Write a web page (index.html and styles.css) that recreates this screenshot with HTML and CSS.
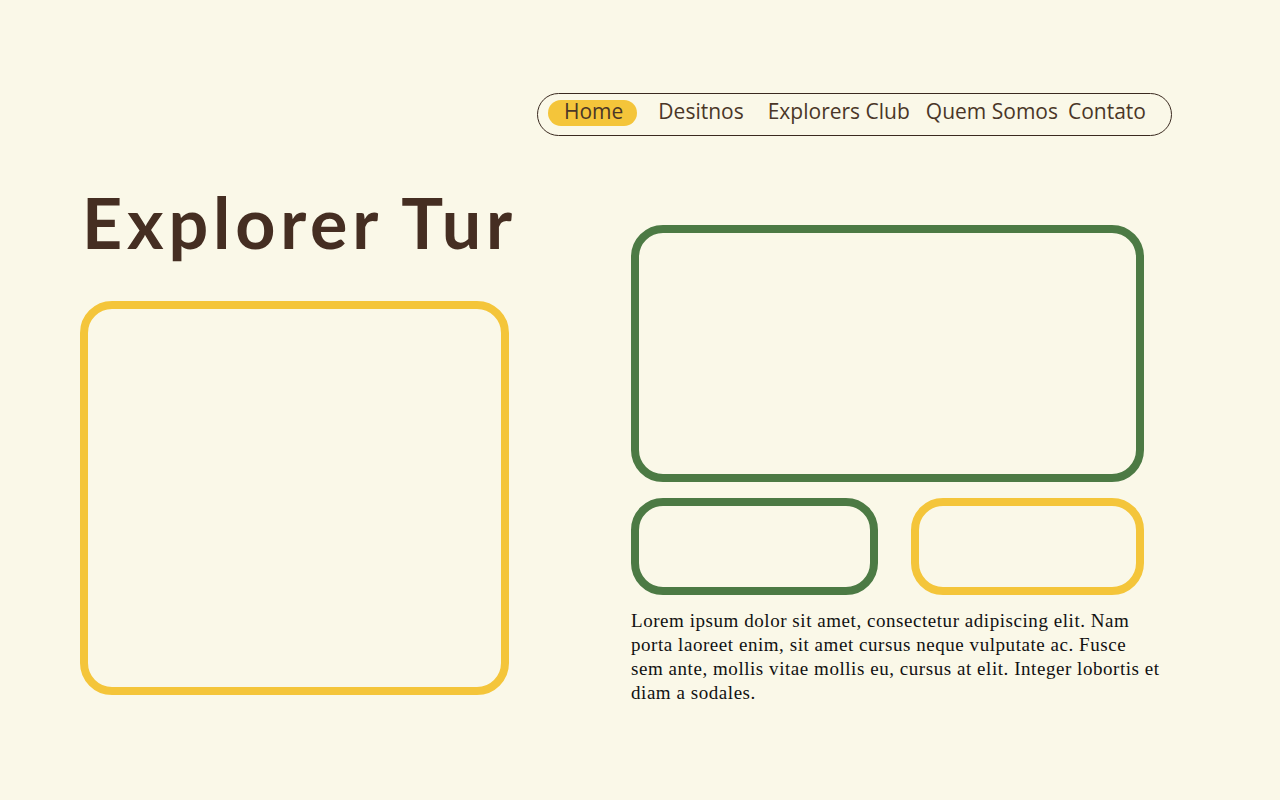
FILE: index.html
```html
<!DOCTYPE html>
<html lang="pt">
<head>
<meta charset="utf-8">
<title>Explorer Tur</title>
<link rel="stylesheet" href="styles.css">
</head>
<body>
<header class="topbar">
  <nav class="nav">
    <a class="nav-item active" href="#">Home</a>
    <a class="nav-item" href="#">Desitnos</a>
    <a class="nav-item" href="#">Explorers Club</a>
    <a class="nav-item" href="#">Quem Somos</a>
    <a class="nav-item" href="#">Contato</a>
  </nav>
</header>
<main class="content">
  <section class="left">
    <h1 class="title">Explorer Tur</h1>
    <div class="frame frame-yellow frame-hero"></div>
  </section>
  <section class="right">
    <div class="frame frame-green frame-wide"></div>
    <div class="small-row">
      <div class="frame frame-green frame-small-a"></div>
      <div class="frame frame-yellow frame-small-b"></div>
    </div>
    <p class="lorem">Lorem ipsum dolor sit amet, consectetur adipiscing elit. Nam porta laoreet enim, sit amet cursus neque vulputate ac. Fusce sem ante, mollis vitae mollis eu, cursus at elit. Integer lobortis et diam a sodales.</p>
  </section>
</main>
</body>
</html>
```

FILE: styles.css
```css
* { box-sizing: border-box; }
html, body { margin: 0; padding: 0; }
body {
  background: #faf8e8;
  width: 1280px;
  height: 800px;
  overflow: hidden;
  font-family: "Open Sans", "Lato", sans-serif;
  color: #452e22;
}
.topbar {
  display: flex;
  justify-content: flex-end;
  padding: 93px 108px 0 0;
}
.nav {
  display: flex;
  align-items: center;
  height: 43px;
  width: 635px;
  border: 1px solid #3a2a20;
  border-radius: 22px;
  padding: 0 10px 3px;
}
.nav-item {
  font-size: 21px;
  color: #4a3627;
  text-decoration: none;
  line-height: 23px;
  padding-bottom: 3px;
}
.nav-item:nth-child(2) { margin-left: 21px; }
.nav-item:nth-child(3) { margin-left: 24px; }
.nav-item:nth-child(4) { margin-left: 16px; }
.nav-item:nth-child(5) { margin-left: 10px; }
.nav-item.active {
  background: #f4c53a;
  border-radius: 13px;
  padding: 0 14px 3px 16px;
}
.content {
  display: flex;
  padding-left: 80px;
}
.left {
  width: 429px;
}
.title {
  margin: 44px 0 0 2px;
  font-family: "Lato", sans-serif;
  font-weight: 700;
  font-size: 70px;
  line-height: 84px;
  color: #452e22;
  letter-spacing: 4.8px;
  white-space: nowrap;
}
.frame {
  border: 8px solid;
  border-radius: 32px;
}
.frame-yellow { border-color: #f4c53a; }
.frame-green { border-color: #4c7a44; }
.frame-hero {
  margin-top: 37px;
  width: 429px;
  height: 394px;
}
.right {
  margin-left: 122px;
  width: 513px;
  padding-top: 89px;
}
.frame-wide {
  width: 513px;
  height: 257px;
}
.small-row {
  display: flex;
  justify-content: space-between;
  margin-top: 16px;
}
.frame-small-a { width: 247px; height: 97px; }
.frame-small-b { width: 233px; height: 97px; }
.lorem {
  margin: 14px 0 0;
  width: 531px;
  font-family: "Liberation Serif", serif;
  font-size: 19px;
  line-height: 24px;
  letter-spacing: 0.55px;
  color: #111;
}
```
